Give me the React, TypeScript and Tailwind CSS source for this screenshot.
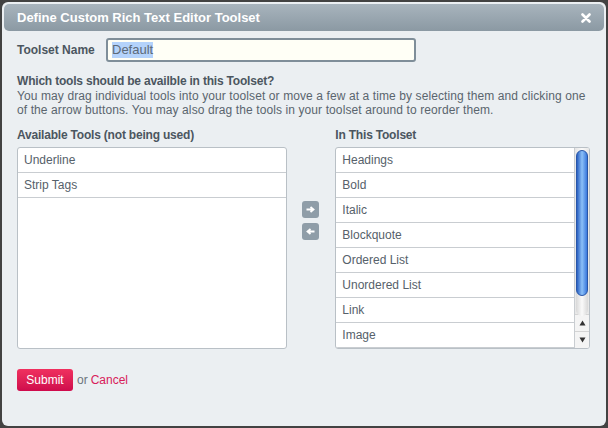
import React from "react";

const leftItems = ["Underline", "Strip Tags"];
const rightItems = ["Headings", "Bold", "Italic", "Blockquote", "Ordered List", "Unordered List", "Link", "Image"];

function Row({ label }: { label: string }) {
  return (
    <div className="h-[25px] shrink-0 border-b border-[#c9cdd1] pl-[6px] leading-[24px] text-[12px] text-[#56616a]">
      {label}
    </div>
  );
}

export default function App() {
  return (
    <div
      className="w-[608px] h-[428px] bg-[#424242] p-[2px]"
      style={{ fontFamily: '"Liberation Sans", Arial, sans-serif' }}
    >
      <div className="w-full h-full rounded-[6px] bg-[#ebeff2] p-[2px] flex flex-col">
        <div className="h-[27px] shrink-0 rounded-[5px] bg-gradient-to-b from-[#a8b4bd] to-[#8b99a3] flex items-center justify-between pl-[13px] pr-[13px]">
          <span className="text-[13px] font-bold text-white">Define Custom Rich Text Editor Toolset</span>
          <svg width="10" height="10" viewBox="0 0 10 10">
            <path d="M1.5 1.5 L8.5 8.5 M8.5 1.5 L1.5 8.5" stroke="white" strokeWidth="2.6" strokeLinecap="round" />
          </svg>
        </div>
        <div className="flex flex-col pl-[13px] pr-[14px]">
          <div className="flex items-center mt-[7px] h-[24px]">
            <span className="w-[89px] text-[12px] font-bold text-[#4b5660]">Toolset Name</span>
            <div className="w-[310px] h-[24px] rounded-[3px] border-2 border-[#7f8e99] bg-[#fffff6] flex items-center pl-[4px]">
              <span className="bg-[#b4d3fb] text-[13px] leading-[16px] text-[#5c6a78]">Default</span>
            </div>
          </div>
          <div className="mt-[12px] text-[12px] font-bold text-[#4b5660] leading-[14px] tracking-[-0.2px]">
            Which tools should be availble in this Toolset?
          </div>
          <div className="text-[12px] text-[#5a656e] leading-[14px] mt-[1px] tracking-[0.1px]">
            You may drag individual tools into your toolset or move a few at a time by selecting them and clicking one of the arrow buttons. You may also drag the tools in your toolset around to reorder them.
          </div>
          <div className="flex mt-[11px]">
            <div className="flex flex-col w-[271px]">
              <div className="text-[12px] font-bold text-[#4b5660] leading-[14px] mb-[5px] tracking-[-0.2px]">Available Tools (not being used)</div>
              <div className="h-[202px] rounded-[3px] border border-[#b9c0c6] bg-white flex flex-col overflow-hidden">
                {leftItems.map((l) => (
                  <Row key={l} label={l} />
                ))}
              </div>
            </div>
            <div className="w-[49px] flex flex-col items-center pt-[73px] gap-[5px]">
              <div className="w-[17px] h-[17px] rounded-[3px] bg-[#8f9da8] flex items-center justify-center">
                <svg width="9" height="7" viewBox="0 0 9 7">
                  <path d="M0.5 3.5 H6.5 M4.5 1 L7.5 3.5 L4.5 6" stroke="white" strokeWidth="1.8" fill="none" />
                </svg>
              </div>
              <div className="w-[17px] h-[17px] rounded-[3px] bg-[#8f9da8] flex items-center justify-center">
                <svg width="9" height="7" viewBox="0 0 9 7">
                  <path d="M8.5 3.5 H2.5 M4.5 1 L1.5 3.5 L4.5 6" stroke="white" strokeWidth="1.8" fill="none" />
                </svg>
              </div>
            </div>
            <div className="flex flex-col w-[256px]">
              <div className="text-[12px] font-bold text-[#4b5660] leading-[14px] mb-[5px] tracking-[-0.2px]">In This Toolset</div>
              <div className="h-[202px] rounded-[3px] border border-[#b9c0c6] bg-white flex overflow-hidden">
                <div className="flex-1 flex flex-col overflow-hidden">
                  {rightItems.map((l) => (
                    <Row key={l} label={l} />
                  ))}
                </div>
                <div className="w-[15px] border-l border-[#c9cdd1] bg-[#f4f4f4] flex flex-col">
                  <div className="flex-1 relative bg-gradient-to-r from-[#e6e6e6] via-[#fafafa] to-[#e6e6e6]">
                    <div className="absolute left-[1px] right-[1px] top-[138px] h-[30px] rounded-b-full bg-gradient-to-r from-[#d8d8d8] via-[#fafafa] to-[#d8d8d8]" />
                    <div className="absolute left-[1px] right-[1px] top-[2px] h-[146px] rounded-full bg-gradient-to-r from-[#2a5fc0] via-[#8cc0f8] to-[#3a78dc] border border-[#2856a8]" />
                  </div>
                  <div className="h-[17px] border-t border-[#d4d4d4] flex items-center justify-center">
                    <svg width="7" height="6" viewBox="0 0 7 6"><path d="M3.5 0.5 L6.5 5.5 H0.5 Z" fill="#333" /></svg>
                  </div>
                  <div className="h-[17px] border-t border-[#d4d4d4] flex items-center justify-center">
                    <svg width="7" height="6" viewBox="0 0 7 6"><path d="M0.5 0.5 H6.5 L3.5 5.5 Z" fill="#333" /></svg>
                  </div>
                </div>
              </div>
            </div>
          </div>
          <div className="flex items-center mt-[20px] gap-[4px]">
            <button className="w-[56px] h-[22px] rounded-[3px] bg-gradient-to-b from-[#f0305f] to-[#cf0a4c] text-white text-[12px] leading-[22px]">
              Submit
            </button>
            <span className="text-[12px] text-[#6b757d]">or</span>
            <span className="text-[12px] text-[#d8205a] -ml-[1px]">Cancel</span>
          </div>
        </div>
      </div>
    </div>
  );
}
